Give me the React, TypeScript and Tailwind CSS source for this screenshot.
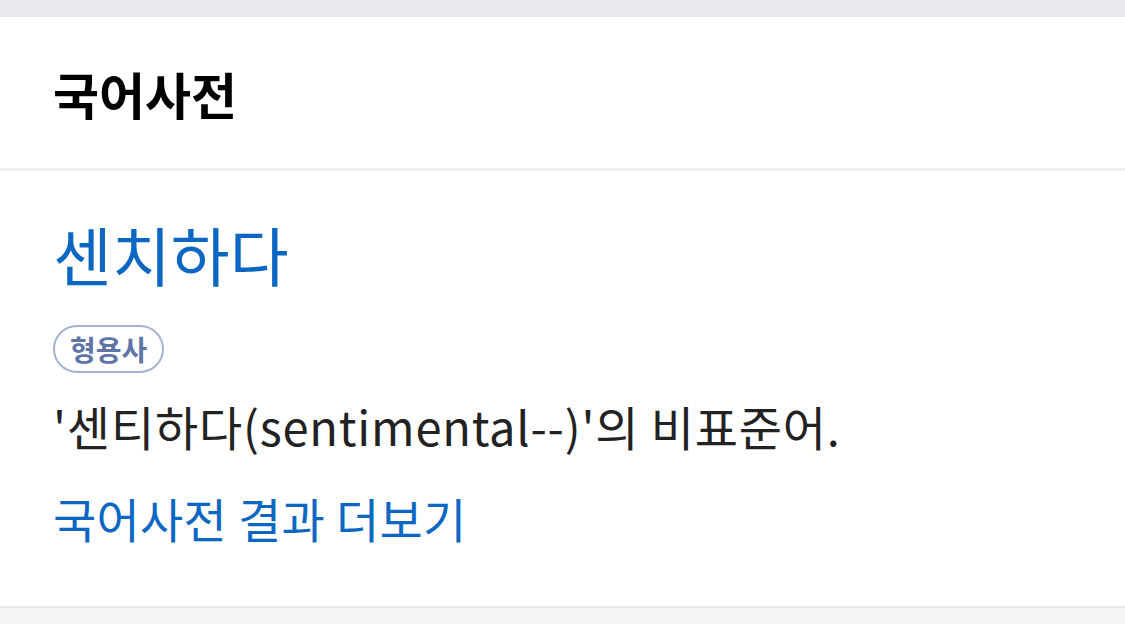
import React from "react";

export default function App() {
  const font = { fontFamily: '"Noto Sans CJK KR", "Noto Sans", sans-serif' };
  return (
    <div className="w-[1125px] h-[624px] bg-[#f3f4f6] flex flex-col overflow-hidden" style={font}>
      <div className="h-[17px] bg-[#e8e9ed] shrink-0" />
      <div className="bg-white h-[151px] shrink-0 flex items-center px-[53px]">
        <h2 className="text-[50px] font-bold text-black leading-none">국어사전</h2>
      </div>
      <div className="h-[3px] bg-[#eceef1] shrink-0" />
      <div className="bg-white h-[435px] shrink-0 px-[53px] pt-[50px] flex flex-col items-start">
        <div className="text-[64px] text-[#0c67c2] leading-none">센치하다</div>
        <span className="mt-[40px] h-[48px] px-[15px] rounded-full border-2 border-[#a3b3d3] text-[#5f75a8] text-[28px] font-bold flex items-center leading-none">형용사</span>
        <p className="mt-[25px] text-[47px] text-[#222222] leading-[56px] tracking-[0.8px]">'센티하다(sentimental--)'의 비표준어.</p>
        <a className="mt-[36px] text-[47px] text-[#0c67c2] leading-[56px] tracking-[0.3px]">국어사전 결과 더보기</a>
      </div>
      <div className="h-[2px] bg-[#e6e8eb] shrink-0" />
      <div className="flex-1 bg-[#f3f4f6]" />
    </div>
  );
}
